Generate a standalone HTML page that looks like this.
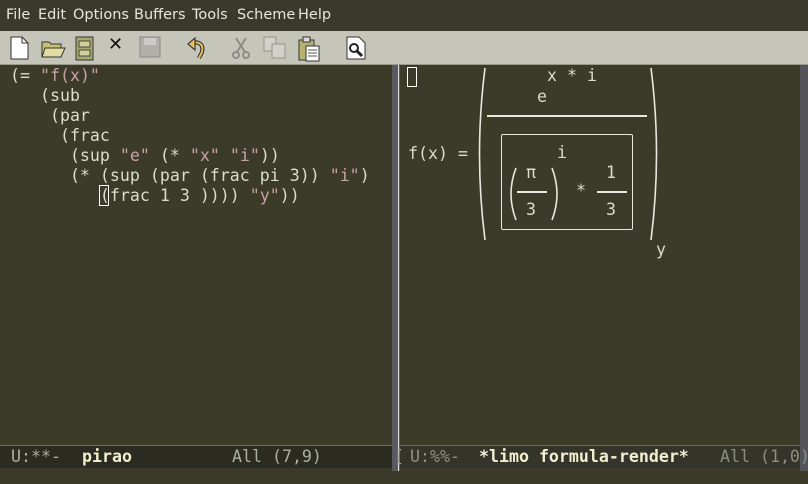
<!DOCTYPE html>
<html><head><meta charset="utf-8"><style>
*{margin:0;padding:0;box-sizing:border-box}
body{width:808px;height:484px;background:#3c3b29;overflow:hidden;position:relative;font-family:"DejaVu Sans Mono","Liberation Mono",monospace;color:#dcdccc}
.menu{position:absolute;left:0;top:0;width:808px;height:31px;background:#3a392c;font-family:"DejaVu Sans",sans-serif;font-size:14.5px;color:#e6e6e0}
.menu span{position:absolute;top:7px}
.tb{position:absolute;left:0;top:31px;width:808px;height:34px;background:#c6c5b9;border-bottom:1px solid #9a9a8a}
.ic{position:absolute;top:5px}
.t{position:absolute;font-size:16.6px;line-height:20px;white-space:pre}
.s{color:#c9a0a8}
.div{position:absolute;left:392px;top:65px;width:8px;height:406px;background:#5a5960}
.div:after{content:"";position:absolute;left:6px;top:0;width:1px;height:100%;background:#e0e0e0}
.sb{position:absolute;left:800px;top:65px;width:8px;height:406px;background:#54535a}
.ml{position:absolute;top:446px;height:21px;font-size:16.6px;line-height:21px;white-space:pre}
.ab{position:absolute;border-color:#e8e8e0;border-style:solid}
.ln{position:absolute;height:2px;background:#e8e8e0}
</style></head><body>
<div class="menu"><span style="left:6px">File</span><span style="left:38px">Edit</span><span style="left:73px">Options</span><span style="left:134px">Buffers</span><span style="left:192px">Tools</span><span style="left:237px">Scheme</span><span style="left:298px">Help</span></div>
<div class="tb">
<svg class="ic" style="left:8px" width="22" height="24"><path d="M3 1h11l6 6v16H3z" fill="#fff" stroke="#333"/><path d="M14 1v6h6" fill="none" stroke="#333"/></svg>
<svg class="ic" style="left:40px" width="26" height="24"><path d="M2 6h7l2 2h10v13H2z" fill="#c8c07a" stroke="#333"/><path d="M5 12h20l-4 9H2z" fill="#e2dca0" stroke="#333"/></svg>
<svg class="ic" style="left:75px" width="20" height="26"><rect x="1" y="1" width="17" height="23" fill="#a8a870" stroke="#333"/><rect x="4" y="5" width="11" height="6" fill="#cfcf98" stroke="#444"/><rect x="4" y="14" width="11" height="6" fill="#cfcf98" stroke="#444"/></svg>
<span class="ic" style="left:108px;top:3px;font:bold 18px 'DejaVu Sans';color:#111">✕</span>
<svg class="ic" style="left:139px" width="22" height="22"><rect x="1" y="1" width="20" height="20" fill="#b0b0a8" stroke="#888"/><rect x="5" y="2" width="12" height="7" fill="#ccc"/></svg>
<svg class="ic" style="left:186px" width="20" height="24"><path d="M4 8c8-4 14 0 12 8l-3 6" fill="none" stroke="#222" stroke-width="4"/><path d="M4 8c8-4 14 0 12 8l-3 6" fill="none" stroke="#e8c060" stroke-width="2"/><path d="M2 8l7-6v12z" fill="#e8c060" stroke="#222"/></svg>
<svg class="ic" style="left:232px" width="18" height="24" opacity=".5"><circle cx="4" cy="19" r="3" fill="none" stroke="#555" stroke-width="2"/><circle cx="14" cy="19" r="3" fill="none" stroke="#555" stroke-width="2"/><path d="M5 16L14 2M13 16L4 2" stroke="#555" stroke-width="2"/></svg>
<svg class="ic" style="left:263px" width="24" height="24" opacity=".5"><rect x="1" y="1" width="12" height="14" fill="#ddd" stroke="#666"/><rect x="9" y="8" width="13" height="14" fill="#ddd" stroke="#666"/></svg>
<svg class="ic" style="left:298px" width="22" height="26"><rect x="1" y="4" width="15" height="20" fill="#b8b070" stroke="#333"/><rect x="8" y="10" width="13" height="15" fill="#fff" stroke="#333"/><path d="M10 14h9M10 17h9M10 20h9" stroke="#555"/><rect x="5" y="1" width="7" height="5" fill="#ddd" stroke="#333"/></svg>
<svg class="ic" style="left:345px" width="22" height="24"><path d="M2 1h12l6 6v16H2z" fill="#fff" stroke="#333"/><circle cx="9" cy="12" r="4" fill="none" stroke="#222" stroke-width="2"/><path d="M12 15l5 5" stroke="#222" stroke-width="3"/></svg>
</div>
<div class="t" style="left:10px;top:66px">(= <span class="s">"f(x)"</span>
   (sub
    (par
     (frac
      (sup <span class="s">"e"</span> (* <span class="s">"x"</span> <span class="s">"i"</span>))
      (* (sup (par (frac pi 3)) <span class="s">"i"</span>)
         (frac 1 3 )))) <span class="s">"y"</span>))</div>
<div style="position:absolute;left:99px;top:185px;width:10px;height:21px;border:1px solid #fff"></div>
<div class="div"></div><div class="sb"></div>
<div style="position:absolute;left:407px;top:67px;width:10px;height:20px;border:1px solid #fff"></div>
<div class="t" style="left:547px;top:66px">x * i</div>
<div class="t" style="left:537px;top:87px">e</div>
<div class="ln" style="left:487px;top:115px;width:160px"></div>
<div class="t" style="left:408px;top:144px">f(x) =</div>
<div class="ab" style="left:501px;top:134px;width:132px;height:96px;border-width:1.5px;border-radius:2px"></div>
<div class="t" style="left:557px;top:143px">i</div>
<div class="t" style="left:526px;top:163px">π</div>
<div class="ln" style="left:517px;top:191px;width:30px;height:1.5px"></div>
<div class="t" style="left:526px;top:200px">3</div>
<div class="t" style="left:576px;top:181px">*</div>
<div class="t" style="left:606px;top:163px">1</div>
<div class="ln" style="left:597px;top:191px;width:30px;height:1.5px"></div>
<div class="t" style="left:606px;top:200px">3</div>
<div class="t" style="left:656px;top:240px">y</div>
<svg style="position:absolute;left:470px;top:64px" width="200" height="180"><g fill="none" stroke="#e8e8e0" stroke-width="1.6"><path d="M15 4Q4 90 15 176"/><path d="M181 4Q192 90 181 176"/><path d="M46 104Q36 130 46 156"/><path d="M82 104Q92 130 82 156"/></g></svg>
<div style="position:absolute;left:0;top:445px;width:392px;height:23px;background:#2c2b22;border-top:1px solid #6a6a5a"></div>
<div style="position:absolute;left:400px;top:445px;width:400px;height:23px;background:#35342a;border-top:1px solid #6a6a5a"></div>
<div class="ml" style="left:11px;color:#a8b0a0">U:**-</div>
<div class="ml" style="left:82px;color:#f0f0d0;font-weight:bold">pirao</div>
<div class="ml" style="left:232px;color:#a8b0a0">All (7,9)</div>
<div class="ml" style="left:394px;color:#a8b0a0">[</div>
<div class="ml" style="left:410px;color:#8a9080">U:%%-</div>
<div class="ml" style="left:479px;color:#f0f0d0;font-weight:bold">*limo formula-render*</div>
<div class="ml" style="left:720px;color:#8a9080">All (1,0)</div>
</body></html>
